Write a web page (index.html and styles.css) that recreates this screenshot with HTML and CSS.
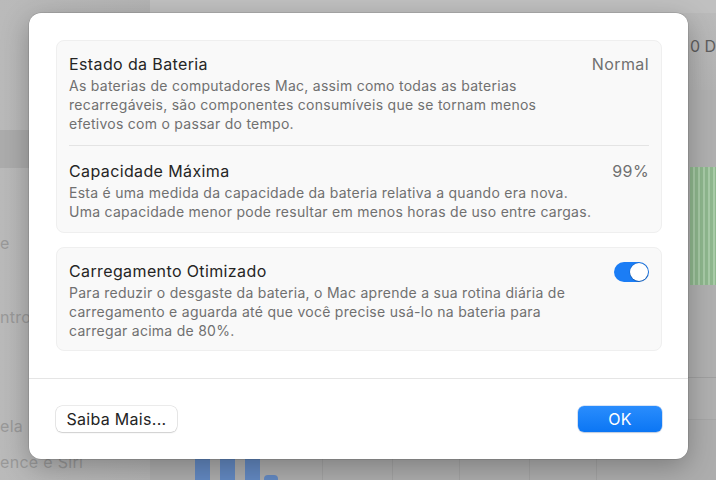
FILE: index.html
```html
<!DOCTYPE html>
<html lang="pt-BR">
<head>
<meta charset="utf-8">
<title>Estado da Bateria</title>
<link rel="stylesheet" href="styles.css">
</head>
<body>
<div class="app">
  <aside class="sidebar">
    <div class="sb-sel"></div>
    <div class="sb-item sb-a">e</div>
    <div class="sb-item sb-b">ntro</div>
    <div class="sb-item sb-c">ela</div>
    <div class="sb-item sb-d">ence e Siri</div>
  </aside>
  <main class="content">
    <div class="top-band"></div>
    <div class="hdr"><span class="hdr-text">0 D</span></div>
    <div class="green-row"><div class="green-bars"></div></div>
    <div class="plot">
      <div class="blue-bars">
        <span class="bbar"></span><span class="bbar"></span><span class="bbar"></span><span class="bbar small"></span>
      </div>
    </div>
  </main>
</div>

<div class="dialog">
  <div class="dialog-body">
    <section class="group">
      <div class="row row1">
        <div class="text">
          <div class="title">Estado da Bateria</div>
          <div class="desc">As baterias de computadores Mac, assim como todas as baterias<br>recarregáveis, são componentes consumíveis que se tornam menos<br>efetivos com o passar do tempo.</div>
        </div>
        <div class="value">Normal</div>
      </div>
      <div class="row row2">
        <div class="text">
          <div class="title">Capacidade Máxima</div>
          <div class="desc">Esta é uma medida da capacidade da bateria relativa a quando era nova.<br>Uma capacidade menor pode resultar em menos horas de uso entre cargas.</div>
        </div>
        <div class="value">99%</div>
      </div>
    </section>
    <section class="group">
      <div class="row row3">
        <div class="text">
          <div class="title">Carregamento Otimizado</div>
          <div class="desc">Para reduzir o desgaste da bateria, o Mac aprende a sua rotina diária de<br>carregamento e aguarda até que você precise usá-lo na bateria para<br>carregar acima de 80%.</div>
        </div>
        <div class="toggle"><span class="knob"></span></div>
      </div>
    </section>
  </div>
  <div class="dialog-footer">
    <button class="btn btn-secondary">Saiba Mais...</button>
    <button class="btn btn-primary">OK</button>
  </div>
</div>
</body>
</html>
```

FILE: styles.css
```css
* { box-sizing: border-box; }

html, body {
  margin: 0;
  padding: 0;
  width: 716px;
  height: 480px;
  overflow: hidden;
}

body {
  font-family: Inter, "Noto Sans", "Liberation Sans", sans-serif;
  background: #b4b4b4;
  position: relative;
}

/* ---------- dimmed background window ---------- */
.app {
  display: flex;
  width: 716px;
  height: 480px;
}

.sidebar {
  width: 150px;
  flex: none;
  background: linear-gradient(90deg, #bababa 0%, #b4b4b4 100%);
  display: flex;
  flex-direction: column;
  padding-top: 130px;
  color: #999999;
  font-size: 16px;
  line-height: 20px;
}

.sb-sel {
  height: 38px;
  background: #acacac;
}

.sb-item { height: 20px; white-space: nowrap; letter-spacing: 0.3px; }
.sb-a { margin-top: 65px; }
.sb-b { margin-top: 54px; }
.sb-c { margin-top: 89px; }
.sb-d { margin-top: 16px; }

.content {
  flex: 1;
  display: flex;
  flex-direction: column;
  background: #b0b0b0;
}

.top-band {
  height: 13px;
  background: #c0c0c0;
  flex: none;
}

.hdr {
  height: 77px;
  display: flex;
  justify-content: flex-end;
  align-items: flex-start;
  padding-top: 23px;
  background: linear-gradient(#bababa, #b2b2b2);
}

.hdr-text {
  width: 26px;
  color: #5e5e5e;
  font-size: 16px;
  line-height: 20px;
  white-space: nowrap;
  overflow: hidden;
}

.green-row {
  height: 288px;
  display: flex;
  justify-content: flex-end;
  padding-top: 77px;
  border-bottom: 1px solid #a0a0a0;
}

.green-bars {
  width: 26px;
  height: 118px;
  background: repeating-linear-gradient(90deg, #8fb88e 0 3px, #a9cca8 3px 5px);
}

.plot {
  flex: 1;
  position: relative;
  background:
    linear-gradient(90deg, transparent 172px, #a3a3a3 172px 173px, transparent 173px 242px, #a3a3a3 242px 243px, transparent 243px 309px, #a3a3a3 309px 310px, transparent 310px 379px, #a3a3a3 379px 380px, transparent 380px 446px, #a3a3a3 446px 447px, transparent 447px),
    #adadad;
  border-top: 1px solid #a6a6a6;
  margin-top: 41px;
}

.blue-bars {
  display: flex;
  gap: 10px;
  align-items: flex-end;
  height: 100%;
  padding-left: 45px;
}

.bbar {
  width: 15px;
  height: 22px;
  background: #6389c2;
}

.bbar.small {
  width: 14px;
  height: 5px;
  border-radius: 4px 4px 0 0;
  margin-left: -6px;
}

/* ---------- dialog ---------- */
.dialog {
  position: absolute;
  left: 29px;
  top: 13px;
  width: 659px;
  height: 446px;
  background: #ffffff;
  border-radius: 12px;
  box-shadow: 0 0 0 0.5px rgba(0, 0, 0, 0.18), 0 8px 28px rgba(0, 0, 0, 0.28);
  display: flex;
  flex-direction: column;
}

.dialog-body {
  padding: 27px 26px 27px 27px;
  display: flex;
  flex-direction: column;
  gap: 14px;
  border-bottom: 1px solid #e5e5e5;
}

.group {
  background: #f9f9f9;
  border: 1px solid #efefef;
  border-radius: 8px;
  padding: 0 12px;
}

.row {
  display: flex;
  justify-content: space-between;
  align-items: flex-start;
}

.row1 { padding: 13px 0 12px; border-bottom: 1px solid #e4e4e4; }
.row2 { padding: 15px 0 11px; }
.row3 { padding: 13px 0 10px; }

.title {
  font-size: 16px;
  line-height: 20px;
  color: #252525;
  letter-spacing: 0.38px;
}

.desc {
  margin-top: 2px;
  font-size: 14px;
  line-height: 19px;
  color: #707070;
  white-space: nowrap;
  letter-spacing: 0.27px;
}

.value {
  font-size: 16px;
  line-height: 20px;
  color: #707070;
  letter-spacing: 0.4px;
}

.toggle {
  margin-top: 1px;
  width: 35px;
  height: 20px;
  border-radius: 10px;
  background: #1b7df5;
  display: flex;
  justify-content: flex-end;
  align-items: center;
  padding: 1px;
}

.knob {
  width: 18px;
  height: 18px;
  border-radius: 50%;
  background: #ffffff;
  box-shadow: 0 0 0 0.5px rgba(0, 0, 0, 0.2), 0 1px 1px rgba(0, 0, 0, 0.15);
}

.dialog-footer {
  flex: 1;
  display: flex;
  justify-content: space-between;
  align-items: flex-start;
  padding: 27px 26px 0 27px;
}

.btn {
  height: 26px;
  border: none;
  border-radius: 6px;
  font-family: Inter, "Noto Sans", "Liberation Sans", sans-serif;
  font-size: 16px;
  line-height: 26px;
  padding: 0;
  letter-spacing: 0.3px;
  cursor: default;
}

.btn-secondary {
  width: 121px;
  background: #ffffff;
  color: #242424;
  box-shadow: 0 0 0 0.5px rgba(0, 0, 0, 0.16), 0 1px 1.5px rgba(0, 0, 0, 0.12);
}

.btn-primary {
  width: 84px;
  background: linear-gradient(#2a8dfd, #0b76f4);
  color: #ffffff;
  box-shadow: 0 0 0 0.5px rgba(0, 80, 200, 0.3), 0 1px 1.5px rgba(0, 0, 0, 0.12);
}
```
